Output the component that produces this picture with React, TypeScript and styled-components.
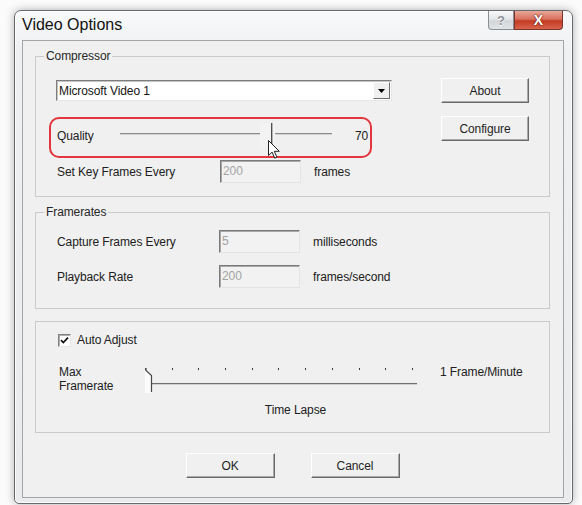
import React from 'react'
import styled, { createGlobalStyle } from 'styled-components'

const GlobalStyle = createGlobalStyle`
  html, body {
    margin: 0;
    padding: 0;
    background: #fbfbfb;
  }
  body {
    font-family: 'Liberation Sans', Arial, sans-serif;
    color: #202020;
  }
`

const Stage = styled.div`
  width: 582px;
  height: 505px;
  box-sizing: border-box;
  padding: 10px 0 0 14px;
  overflow: hidden;
`

const Window = styled.div`
  width: 559px;
  height: 494px;
  box-sizing: border-box;
  border: 1px solid #66696d;
  border-radius: 7px 7px 5px 5px;
  background: linear-gradient(180deg, #f8f9fa 0%, #eef0f1 8%, #e9ebec 100%);
  box-shadow: 0 0 9px rgba(0, 0, 0, 0.3), inset 0 0 0 1px #fdfdfd;
  display: flex;
  flex-direction: column;
  padding: 0 8px 5px 7px;
`

const TitleBar = styled.div`
  height: 29px;
  display: flex;
  justify-content: space-between;
  align-items: flex-start;
`

const Title = styled.div`
  font-size: 16px;
  line-height: 16px;
  color: #111111;
  margin-top: 6px;
`

const CaptionButtons = styled.div`
  display: flex;
  margin-right: 1px;
`

const CaptionButton = styled.div<{ $close?: boolean }>`
  height: 19px;
  width: ${p => (p.$close ? '49px' : '26px')};
  box-sizing: border-box;
  border: 1px solid ${p => (p.$close ? '#7a3429' : '#8a8d91')};
  border-top: none;
  border-radius: ${p => (p.$close ? '0 0 4px 0' : '0 0 0 4px')};
  background: ${p =>
    p.$close
      ? 'linear-gradient(180deg, #e9a899 0%, #d8715f 45%, #c43b23 55%, #d9634c 100%)'
      : 'linear-gradient(180deg, #f7f8f9 0%, #e4e6e8 45%, #d3d6d9 55%, #e2e4e6 100%)'};
  display: flex;
  align-items: center;
  justify-content: center;
  font-size: ${p => (p.$close ? '14px' : '13px')};
  font-weight: bold;
  color: ${p => (p.$close ? '#ffffff' : '#8f9296')};
  text-shadow: ${p =>
    p.$close ? '0 0 2px #6a1d12, 0 0 1px #6a1d12' : '0 1px 0 #ffffff'};
`

const Client = styled.div`
  flex: 1;
  box-sizing: border-box;
  border: 1px solid #a3a6a9;
  background: #f0f0f0;
  padding: 8px 13px 0 12px;
  display: flex;
  flex-direction: column;
  font-size: 12px;
  letter-spacing: -0.1px;
`

const Group = styled.fieldset<{ $bare?: boolean }>`
  margin: ${p => (p.$bare ? '12px 0 0' : '8px 0 0')};
  padding: 0;
  border: 1px solid #cacaca;
  min-width: 0;
  &:first-child {
    margin-top: 0;
  }
`

const Legend = styled.legend`
  margin-left: 8px;
  padding: 0 2px;
  line-height: 14px;
  color: #262626;
`

const GroupBody = styled.div<{ $pad: string }>`
  padding: ${p => p.$pad};
`

const CompressorLayout = styled.div`
  display: flex;
  justify-content: space-between;
`

const LeftColumn = styled.div`
  width: 336px;
  display: flex;
  flex-direction: column;
`

const ButtonColumn = styled.div`
  display: flex;
  flex-direction: column;
  gap: 13px;
  margin-top: -2px;
`

const Select = styled.div`
  height: 21px;
  box-sizing: border-box;
  background: #ffffff;
  border: 1px solid;
  border-color: #7d7d7d #e6e6e6 #e6e6e6 #7d7d7d;
  box-shadow: inset 1px 1px 0 #c4c4c4;
  display: flex;
  align-items: center;
  justify-content: space-between;
  padding: 0 1px 0 2px;
  color: #141414;
`

const SelectArrow = styled.div`
  width: 17px;
  height: 17px;
  box-sizing: border-box;
  background: #f0f0f0;
  border: 1px solid;
  border-color: #ffffff #6b6b6b #6b6b6b #ffffff;
  display: flex;
  align-items: center;
  justify-content: center;
`

const PushButton = styled.div<{ $w: number }>`
  width: ${p => p.$w}px;
  height: 25px;
  box-sizing: border-box;
  background: #f0f0f0;
  border: 1px solid;
  border-color: #ffffff #6a6a6a #6a6a6a #ffffff;
  box-shadow: inset -1px -1px 0 #a9a9a9;
  display: flex;
  align-items: center;
  justify-content: center;
  color: #1f1f1f;
`

const Highlight = styled.div`
  width: 323px;
  box-sizing: border-box;
  margin: 16px 0 0 -7px;
  border: 2px solid #e2353c;
  border-radius: 10px;
  padding: 4px 2px 7px 6px;
  display: flex;
  align-items: center;
`

const RowLabel = styled.div<{ $w: number }>`
  width: ${p => p.$w}px;
  flex-shrink: 0;
  line-height: 14px;
`

const QualityTrack = styled.div`
  position: relative;
  width: 212px;
  height: 26px;
  flex-shrink: 0;
  margin-right: 23px;
  &::before {
    content: '';
    position: absolute;
    left: 0;
    right: 0;
    top: 10px;
    height: 1px;
    background: #8c8c8c;
    box-shadow: 0 1px 0 #d2d2d2;
  }
`

const QualityThumb = styled.div<{ $at: number }>`
  position: absolute;
  top: 0;
  left: ${p => p.$at}px;
  width: 15px;
  height: 25px;
  background: #f3f3f3;
  &::after {
    content: '';
    position: absolute;
    left: 11px;
    top: 0;
    bottom: 1px;
    width: 1px;
    background: #4e4e4e;
    box-shadow: 1px 0 0 #b5b5b5;
  }
`

const Pointer = styled.svg`
  position: absolute;
  left: 148px;
  top: 17px;
`

const FieldRow = styled.div<{ $mt: number }>`
  display: flex;
  align-items: center;
  margin-top: ${p => p.$mt}px;
`

const TextBox = styled.div`
  width: 81px;
  height: 23px;
  box-sizing: border-box;
  flex-shrink: 0;
  background: #f2f2f2;
  border: 1px solid;
  border-color: #7a7a7a #e4e4e4 #e4e4e4 #7a7a7a;
  box-shadow: inset 1px 1px 0 #a8a8a8;
  color: #a3a3a3;
  padding: 3px 0 0 2px;
  line-height: 14px;
  margin-right: 13px;
`

const CheckRow = styled.div`
  display: flex;
  align-items: center;
  gap: 6px;
  padding-left: 1px;
`

const CheckBox = styled.div`
  width: 13px;
  height: 13px;
  box-sizing: border-box;
  background: #ffffff;
  border: 1px solid;
  border-color: #808080 #e6e6e6 #e6e6e6 #808080;
  box-shadow: inset 1px 1px 0 #b0b0b0;
  display: flex;
  align-items: center;
  justify-content: center;
`

const RateRow = styled.div`
  display: flex;
  align-items: flex-start;
  margin-top: 18px;
  padding-left: 2px;
`

const RateTrack = styled.div`
  position: relative;
  width: 274px;
  height: 28px;
  flex-shrink: 0;
  margin: 1px 21px 0 0;
  &::before {
    content: '';
    position: absolute;
    left: 7px;
    right: 2px;
    top: 17px;
    height: 1px;
    background: #6e6e6e;
    box-shadow: 0 1px 0 #cfcfcf;
  }
`

const Ticks = styled.div`
  width: 268px;
  display: flex;
  justify-content: space-between;
  padding-top: 2px;
`

const Tick = styled.span`
  width: 1px;
  height: 2px;
  background: #3a3a3a;
`

const RateThumb = styled.svg`
  position: absolute;
  left: 0;
  top: 0;
`

const Caption = styled.div`
  text-align: center;
  line-height: 14px;
  margin-top: 9px;
  padding-left: 5px;
`

const DialogButtons = styled.div`
  display: flex;
  justify-content: center;
  gap: 36px;
  margin-top: 20px;
`

const frameTicks = Array.from({ length: 11 }, (_, i) => i)

export default function App() {
  return (
    <>
      <GlobalStyle />
      <Stage>
        <Window>
          <TitleBar>
            <Title>Video Options</Title>
            <CaptionButtons>
              <CaptionButton>?</CaptionButton>
              <CaptionButton $close>X</CaptionButton>
            </CaptionButtons>
          </TitleBar>

          <Client>
            <Group>
              <Legend>Compressor</Legend>
              <GroupBody $pad="17px 20px 13px 20px">
                <CompressorLayout>
                  <LeftColumn>
                    <Select>
                      <span>Microsoft Video 1</span>
                      <SelectArrow>
                        <svg width="7" height="4" viewBox="0 0 7 4">
                          <path d="M0 0h7L3.5 4z" fill="#000" />
                        </svg>
                      </SelectArrow>
                    </Select>

                    <Highlight>
                      <RowLabel $w={63}>Quality</RowLabel>
                      <QualityTrack>
                        <QualityThumb $at={140} />
                        <Pointer width="12" height="19" viewBox="0 0 12 19">
                          <path
                            d="M0.5 0.5v15l3.6-3.4 2.6 6 2.2-1-2.6-5.8h5z"
                            fill="#fff"
                            stroke="#222"
                            strokeWidth="1"
                            strokeLinejoin="round"
                          />
                        </Pointer>
                      </QualityTrack>
                      <span>70</span>
                    </Highlight>

                    <FieldRow $mt={2}>
                      <RowLabel $w={163} style={{ paddingLeft: 1 }}>
                        Set Key Frames Every
                      </RowLabel>
                      <TextBox>200</TextBox>
                      <span>frames</span>
                    </FieldRow>
                  </LeftColumn>

                  <ButtonColumn>
                    <PushButton $w={88}>About</PushButton>
                    <PushButton $w={88}>Configure</PushButton>
                  </ButtonColumn>
                </CompressorLayout>
              </GroupBody>
            </Group>

            <Group>
              <Legend>Framerates</Legend>
              <GroupBody $pad="11px 20px 20px 21px">
                <FieldRow $mt={0}>
                  <RowLabel $w={162}>Capture Frames Every</RowLabel>
                  <TextBox>5</TextBox>
                  <span>milliseconds</span>
                </FieldRow>
                <FieldRow $mt={12}>
                  <RowLabel $w={162}>Playback Rate</RowLabel>
                  <TextBox>200</TextBox>
                  <span>frames/second</span>
                </FieldRow>
              </GroupBody>
            </Group>

            <Group $bare>
              <GroupBody $pad="11px 20px 15px 21px">
                <CheckRow>
                  <CheckBox>
                    <svg width="9" height="9" viewBox="0 0 9 9">
                      <path d="M1 4.2l2.3 2.4L8 1.6" fill="none" stroke="#111" strokeWidth="1.7" />
                    </svg>
                  </CheckBox>
                  <span>Auto Adjust</span>
                </CheckRow>

                <RateRow>
                  <RowLabel $w={86}>
                    Max
                    <br />
                    Framerate
                  </RowLabel>
                  <RateTrack>
                    <Ticks>
                      {frameTicks.map(t => (
                        <Tick key={t} />
                      ))}
                    </Ticks>
                    <RateThumb width="10" height="27" viewBox="0 0 10 27">
                      <path d="M0 5l6 5v17H0z" fill="#fbfbfb" />
                      <path d="M1 2v2.5l5.5 5V26" fill="none" stroke="#4a4a4a" strokeWidth="1.2" />
                    </RateThumb>
                  </RateTrack>
                  <RowLabel $w={90}>1 Frame/Minute</RowLabel>
                </RateRow>

                <Caption>Time Lapse</Caption>
              </GroupBody>
            </Group>

            <DialogButtons>
              <PushButton $w={89}>OK</PushButton>
              <PushButton $w={89}>Cancel</PushButton>
            </DialogButtons>
          </Client>
        </Window>
      </Stage>
    </>
  )
}
